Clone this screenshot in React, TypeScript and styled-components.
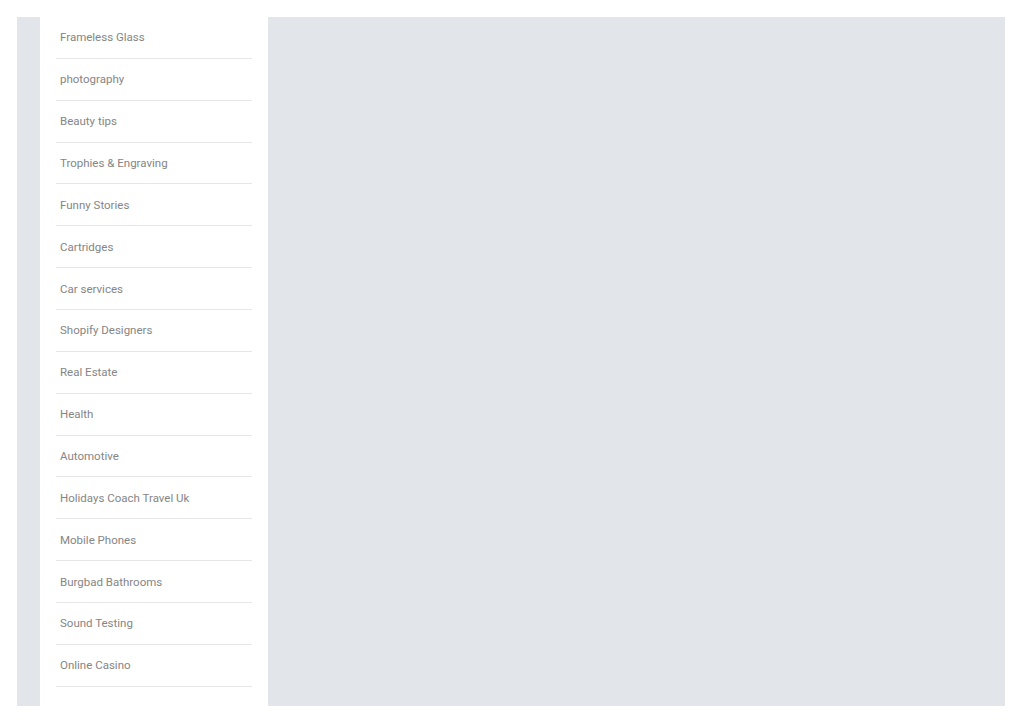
import React from 'react';
import styled, { createGlobalStyle } from 'styled-components';

const categories = [
  'Frameless Glass',
  'photography',
  'Beauty tips',
  'Trophies & Engraving',
  'Funny Stories',
  'Cartridges',
  'Car services',
  'Shopify Designers',
  'Real Estate',
  'Health',
  'Automotive',
  'Holidays Coach Travel Uk',
  'Mobile Phones',
  'Burgbad Bathrooms',
  'Sound Testing',
  'Online Casino',
];

const GlobalStyle = createGlobalStyle`
  html, body {
    margin: 0;
    padding: 0;
    background: #ffffff;
  }
  body {
    font-family: Roboto, "Liberation Sans", Arial, sans-serif;
  }
`;

const Page = styled.div`
  padding: 17px 19px 17px 17px;
`;

const Layout = styled.div`
  display: flex;
  height: 689px;
  background-color: #e2e5e9;
  padding-left: 23px;
`;

const Sidebar = styled.aside`
  width: 228px;
  flex-shrink: 0;
  background-color: #ffffff;
  padding: 0 16px;
  box-sizing: border-box;
  overflow: hidden;
`;

const CategoryList = styled.ul`
  list-style: none;
  margin: 0;
  padding: 0;
`;

const CategoryItem = styled.li`
  display: flex;
  align-items: center;
  height: 41.87px;
  box-sizing: border-box;
  padding: 0 4px;
  border-bottom: 1px solid #e6e6e6;
  font-size: 11.5px;
  color: #858585;
  cursor: pointer;
`;

const Content = styled.main`
  flex: 1;
`;

function App() {
  return (
    <Page>
      <GlobalStyle />
      <Layout>
        <Sidebar>
          <CategoryList>
            {categories.map((name) => (
              <CategoryItem key={name}>{name}</CategoryItem>
            ))}
          </CategoryList>
        </Sidebar>
        <Content />
      </Layout>
    </Page>
  );
}

export default App;
